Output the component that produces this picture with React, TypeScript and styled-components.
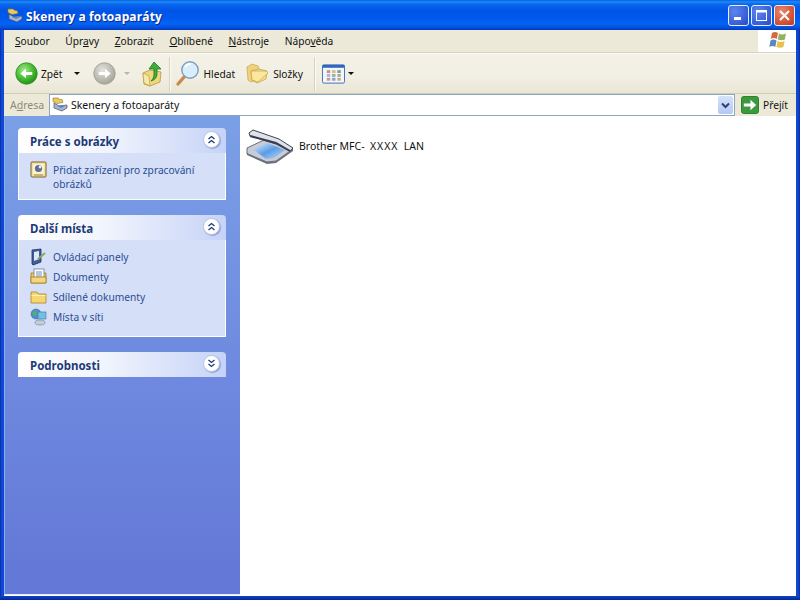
import React from "react";
import styled, { createGlobalStyle } from "styled-components";

const Global = createGlobalStyle`
  html, body { margin: 0; padding: 0; width: 800px; height: 600px; overflow: hidden; background: #0831d9; }
  * { box-sizing: border-box; }
`;
const uiFont = `"Noto Sans", "Open Sans", "Liberation Sans", sans-serif`;

const Win = styled.div`
  width: 800px; height: 600px; display: flex; flex-direction: column;
  font-family: ${uiFont}; font-size: 11px; color: #000;
  background: linear-gradient(90deg, #0a2aa0 0, #0f48d4 1.5px, #0f48d4 798px, #0a2aa0 800px);
  padding-bottom: 4px; position: relative;
`;
const BottomEdge = styled.div`
  position: absolute; left: 0; right: 0; bottom: 0; height: 4px;
  background: linear-gradient(180deg, #0b45c8, #08259a);
`;
const TitleBar = styled.div`
  height: 30px; flex: none; display: flex; align-items: center; padding: 1px 5px 0 7px;
  background: linear-gradient(180deg, #0a5ae0 0%, #1a8cf8 6%, #0a68ee 14%, #0054e6 35%, #0058ee 60%, #0464f2 80%, #0450dc 92%, #0338c0 100%);
`;
const TitleText = styled.div`
  margin: 2px 0 0 3px; color: #fff; font-weight: 700; font-size: 12px; letter-spacing: 0.12px;
  font-family: "Open Sans", ${uiFont}; text-shadow: 1px 1px 0 #0a2a90; flex: 1; white-space: nowrap;
`;
const WinBtn = styled.div<{ $close?: boolean }>`
  width: 21px; height: 21px; margin-left: 2px; border: 1px solid #e8eefc; border-radius: 3px;
  display: flex; align-items: center; justify-content: center;
  background: ${p => p.$close
    ? "radial-gradient(circle at 35% 30%, #e88b70 0%, #d6583a 55%, #b93a1c 100%)"
    : "radial-gradient(circle at 30% 30%, #5c86ea 0%, #3c63dc 60%, #2a48c0 100%)"};
`;
const Inner = styled.div`
  flex: 1; min-height: 0; display: flex; flex-direction: column;
  margin: 0 4px 0 4px; background: #ece9d8; position: relative; z-index: 1;
`;
const MenuBar = styled.div`
  height: 23px; flex: none; display: flex; align-items: center; padding-left: 11px;
  background: #ece9d8; border-bottom: 1px solid #d8d2bd; position: relative;
  box-shadow: 0 1px 0 #fbfaf5;
`;
const MenuItem = styled.span`
  margin-right: 15.6px; font-size: 10.2px; color: #111; white-space: nowrap;
  u { text-decoration: underline; }
`;
const Brand = styled.div`
  margin-left: auto; width: 38px; height: 22px; background: #fff; padding-left: 2px;
  display: flex; align-items: center; justify-content: center;
`;
const ToolBar = styled.div`
  height: 41px; flex: none; display: flex; align-items: center; padding: 1px 0 0 11px;
  background: linear-gradient(180deg, #f4f2e8 0%, #f1efe3 60%, #e9e6d5 100%);
  border-bottom: 1px solid #d0ccb8;
`;
const ToolGroup = styled.div<{ $ml?: number }>`
  display: flex; align-items: center; margin-left: ${p => p.$ml ?? 0}px;
`;
const ToolLabel = styled.span<{ $ml?: number }>`
  margin-left: ${p => p.$ml ?? 3}px; font-size: 10.2px; color: #111; white-space: nowrap;
`;
const Caret = styled.span<{ $muted?: boolean; $ml: number }>`
  width: 0; height: 0; margin-left: ${p => p.$ml}px; flex: none;
  border-left: 3px solid transparent; border-right: 3px solid transparent;
  border-top: 3px solid ${p => (p.$muted ? "#b9b6a8" : "#111")};
`;
const Sep = styled.div<{ $ml: number }>`
  width: 2px; height: 34px; margin-left: ${p => p.$ml}px;
  background: linear-gradient(90deg, #d6d2c0 50%, #fbfaf4 50%);
`;
const AddressBar = styled.div`
  height: 22px; flex: none; display: flex; align-items: center; background: #ece9d8; padding-left: 6px;
`;
const AddressLabel = styled.span`
  color: #8b8a80; font-size: 10.5px; width: 39px; white-space: nowrap;
`;
const Field = styled.div`
  flex: 1; height: 22px; border: 1px solid #8ca5bd; background: #fff; display: flex; align-items: center; padding-left: 2px;
`;
const FieldText = styled.span`
  margin-left: 3px; font-size: 10.5px; color: #111; white-space: nowrap; flex: 1;
`;
const Drop = styled.div`
  width: 15px; height: 18px; margin-right: 1px; border-radius: 2px; display: flex; align-items: center; justify-content: center;
  background: linear-gradient(180deg, #d6e2fb, #b4c8f2);
`;
const Go = styled.div`
  width: 61px; flex: none; display: flex; align-items: center; padding-left: 6px;
`;
const Body = styled.div`
  flex: 1; min-height: 0; display: flex; background: #fff;
`;
const Side = styled.div`
  width: 236px; flex: none; padding: 12px 14px 0 14px;
  display: flex; flex-direction: column; gap: 15px;
  background: linear-gradient(180deg, #7ba0e6 0%, #6f8be0 50%, #6377d6 100%);
  border-left: 1px solid #8ab0f0; border-bottom: 1px solid #e6ecfb;
  height: 479px;
`;
const Card = styled.div`
  width: 208px; margin-left: -1px;
`;
const CardHead = styled.div`
  height: 25px; display: flex; align-items: center; justify-content: space-between; padding: 0 6px 0 12px;
  border-radius: 4px 4px 0 0;
  background: linear-gradient(90deg, #ffffff 0%, #f2f5fd 40%, #c6d3f7 100%);
  font-size: 11.5px; font-weight: 700; color: #1c3a78;
`;
const CardTitle = styled.span`
  margin-top: 2px;
`;
const Chevron = styled.div`
  width: 17px; height: 17px; border-radius: 50%; background: #fff; border: 1px solid #b7c4ea; margin-bottom: 2px;
  box-shadow: 1px 1px 1px #8fa2d8; display: flex; align-items: center; justify-content: center;
`;
const CardBody = styled.div<{ $h: number }>`
  height: ${p => p.$h}px; padding: 8px 8px 0 11px; background: #d5dff7;
  border: 1px solid #fff; border-top: none; display: flex; flex-direction: column;
`;
const Task = styled.div`
  display: flex; align-items: flex-start; color: #2a4d94; font-size: 10.2px; line-height: 14px; min-height: 20px;
  svg { flex: none; margin-right: 6px; }
  span { display: block; margin-top: 2px; }
`;
const Content = styled.div`
  flex: 1; padding: 12px 0 0 5px; background: #fff;
`;
const Item = styled.div`
  display: flex; align-items: center; font-size: 10.5px; color: #111; white-space: pre;
`;
const ItemLabel = styled.span`
  margin-left: 5px;
`;
const Model = styled.span`
  letter-spacing: 0.9px;
`;

const Back = ({ grey }: { grey?: boolean }) => {
  const id = grey ? "gf" : "gb";
  return (
    <svg width="23" height="23" viewBox="0 0 24 24">
      <defs>
        <radialGradient id={id} cx="40%" cy="35%" r="70%">
          {grey ? <><stop offset="0" stopColor="#e4e3dd" /><stop offset="1" stopColor="#a3a298" /></> : <><stop offset="0" stopColor="#a6ea8c" /><stop offset="0.6" stopColor="#44b82e" /><stop offset="1" stopColor="#1b8a18" /></>}
        </radialGradient>
      </defs>
      <circle cx="12" cy="12" r="11.2" fill={`url(#${id})`} stroke={grey ? "#9b9a90" : "#2b8e22"} strokeWidth="0.8" />
      {grey
        ? <path d="M6 10.5h6.5V7l6 5-6 5v-3.5H6z" fill="#fff" />
        : <path d="M18 10.5h-6.5V7l-6 5 6 5v-3.5H18z" fill="#fff" />}
    </svg>
  );
};
const FolderUp = () => (
  <svg width="22" height="26" viewBox="0 0 22 26">
    <path d="M2 12l7-3 11 2-1 10-10 4-6-2z" fill="#f0d67c" stroke="#b6953c" strokeWidth="0.8" />
    <path d="M2 12l6 3 1 10-6-3z" fill="#f8e8a8" stroke="#b6953c" strokeWidth="0.6" />
    <path d="M13 1l7 7h-4v5c0 3-2 6-6 7 2-2 3-4 3-7V8H8z" fill="#3cae3a" stroke="#1f7a1e" strokeWidth="0.8" />
  </svg>
);
const Search = () => (
  <svg width="25" height="27" viewBox="0 0 25 27">
    <path d="M3 24l7-8" stroke="#c98a4a" strokeWidth="3.4" strokeLinecap="round" />
    <circle cx="15" cy="10" r="8.2" fill="#d8eefc" stroke="#7f9cc0" strokeWidth="1.4" />
    <path d="M10 7a6 6 0 0 1 6-3" stroke="#fff" strokeWidth="1.6" fill="none" />
  </svg>
);
const Folders = () => (
  <svg width="23" height="21" viewBox="0 0 23 21">
    <path d="M1 4l5-3 6 2 1 3-2 11-6 2-3-2z" fill="#f0d27a" stroke="#c4a44e" strokeWidth="0.7" />
    <path d="M5 8l8-2 8 2-1 8-9 4-5-3z" fill="#f8e08c" stroke="#c4a44e" strokeWidth="0.8" />
    <path d="M5 8l15 0 2 2-10 9-6-2z" fill="#fbe89e" stroke="#c4a44e" strokeWidth="0.7" />
  </svg>
);
const Views = () => (
  <svg width="23" height="20" viewBox="0 0 24 20">
    <rect x="0.5" y="0.5" width="23" height="19" rx="1.5" fill="#f4f6fa" stroke="#3b6fb8" />
    <rect x="0.5" y="0.5" width="23" height="3" fill="#2f66c0" />
    {[5, 10.5, 16].map((x, i) => [6, 10, 14].map((y, j) => (
      <rect key={`${i}${j}`} x={x} y={y} width="3.6" height="3"
        fill={[["#c89090", "#a8b8d8", "#c89a9a"], ["#d0bc80", "#98b498", "#8ca4cc"], ["#7aa488", "#a8a8b4", "#c4b078"]][i][j]} />
    )))}
  </svg>
);
const Scanner = () => (
  <svg width="16" height="16" viewBox="0 0 16 16">
    <path d="M1 1h5l2 1.5h2l1 3-6 1-4-2z" fill="#ecc95e" stroke="#8a7430" strokeWidth="0.6" />
    <path d="M2 6l5 3 8-1v3l-5 3-8-3z" fill="#aab4c8" stroke="#44506c" strokeWidth="0.7" />
    <path d="M5 9l4 2 4-2-2-1z" fill="#4f86d0" />
  </svg>
);
const BigScanner = () => (
  <svg width="49" height="36" viewBox="0 0 49 36">
    <defs>
      <linearGradient id="gl" x1="0" y1="0" x2="1" y2="1"><stop offset="0" stopColor="#e8f2fc" /><stop offset="0.5" stopColor="#5a9be6" /><stop offset="1" stopColor="#c8ddf5" /></linearGradient>
    </defs>
    <path d="M2 20L21 11l27 10-17 12-9 1L2 26z" fill="#c8ccd4" stroke="#4a4f60" strokeWidth="0.8" />
    <path d="M2 25l20 9 9-1 17-12v2L31 35l-9 1L2 27z" fill="#6b7080" />
    <path d="M8 21l14-6 18 7-11 8-8 1z" fill="url(#gl)" />
    <path d="M4 5l4-3 26 9 14 9-3 3-14-7L5 8z" fill="#dfe2e8" stroke="#3f4454" strokeWidth="1" />
    <path d="M5 8l26 7 14 8" stroke="#3a3f52" strokeWidth="2" fill="none" />
  </svg>
);
const Flag = () => (
  <svg width="20" height="20" viewBox="0 0 20 20">
    <path d="M4 2q3-2 6 0l-1.2 6q-3-2-6 0z" fill="#d8683f" />
    <path d="M11 2.5q3 2 7 0l-1.2 6q-3 1.5-7 0z" fill="#8fb45a" />
    <path d="M2.5 9.5q3-2 6 0L7.3 16q-3-2-6 0z" fill="#5b86c4" />
    <path d="M9.6 10q3 2 7 0l-1.2 6q-3 1.5-7 0z" fill="#e8c050" />
  </svg>
);
const GoIcon = () => (
  <svg width="18" height="18" viewBox="0 0 19 19">
    <rect x="0.5" y="0.5" width="18" height="18" rx="2.5" fill="#3a9a3c" stroke="#2a7a2c" />
    <path d="M3 8h7V4l6 5.5-6 5.5v-4H3z" fill="#fff" />
  </svg>
);
const AddTask = () => (
  <svg width="17" height="17" viewBox="0 0 17 17">
    <rect x="1" y="1" width="15" height="15" rx="1" fill="#f2e0a0" stroke="#7a6228" />
    <rect x="3" y="3" width="11" height="10" fill="#fbf3d0" />
    <circle cx="8.5" cy="7.5" r="3.6" fill="#5f6f90" />
    <circle cx="10" cy="6" r="1.4" fill="#e8eef8" />
    <path d="M4 14h9" stroke="#a08840" />
  </svg>
);
const ControlIcon = () => (
  <svg width="17" height="18" viewBox="0 0 17 18">
    <path d="M2 2l9-1v13l-8 3-1-1z" fill="#3f5f98" stroke="#1f3468" strokeWidth="0.8" />
    <path d="M4 4l5-1v8l-5 2z" fill="#dfe8f6" />
    <path d="M8 11l7-6" stroke="#8aa860" strokeWidth="2" />
  </svg>
);
const DocsIcon = () => (
  <svg width="17" height="17" viewBox="0 0 17 17">
    <path d="M1 5h15v10H1z" fill="#f3c85c" stroke="#a07c28" strokeWidth="0.8" />
    <rect x="4" y="1" width="10" height="10" fill="#fff" stroke="#6f7f9a" strokeWidth="0.8" />
    <path d="M6 4h6M6 6h6M6 8h6" stroke="#6f8ec0" />
    <path d="M1 9h15v6H1z" fill="#f6d678" stroke="#a07c28" strokeWidth="0.8" />
  </svg>
);
const FolderIcon = () => (
  <svg width="17" height="17" viewBox="0 0 17 17">
    <path d="M1 4h6l1.5 2H16v9H1z" fill="#f7d66e" stroke="#a8842c" strokeWidth="0.8" />
    <path d="M1.5 7.5h14" stroke="#fdf0b8" />
  </svg>
);
const NetIcon = () => (
  <svg width="17" height="18" viewBox="0 0 17 18">
    <circle cx="6" cy="6" r="5" fill="#4a90d8" stroke="#2a5a9a" strokeWidth="0.5" />
    <path d="M3 3l4 1-1 4-3-1z" fill="#60b050" />
    <rect x="8" y="4" width="8" height="7" fill="#6fc0e8" stroke="#50708f" strokeWidth="0.6" />
    <ellipse cx="10" cy="14.5" rx="5" ry="2.5" fill="#c4cad6" stroke="#707a90" strokeWidth="0.6" />
  </svg>
);
const Chev = ({ down }: { down?: boolean }) => (
  <svg width="9" height="9" viewBox="0 0 9 9" fill="none" stroke="#1c3a78" strokeWidth="1.3">
    {down ? <path d="M1.5 1l3 2.5L7.5 1M1.5 5l3 2.5L7.5 5" /> : <path d="M1.5 4l3-2.5L7.5 4M1.5 8l3-2.5L7.5 8" />}
  </svg>
);

const menus: [string, string, string][] = [
  ["", "S", "oubor"], ["Úpr", "a", "vy"], ["", "Z", "obrazit"], ["", "O", "blíbené"], ["", "N", "ástroje"], ["Nápo", "v", "ěda"],
];

export default function App() {
  return (
    <Win>
      <Global />
      <TitleBar>
        <Scanner />
        <TitleText>Skenery a fotoaparáty</TitleText>
        <WinBtn>
          <svg width="11" height="11" viewBox="0 0 11 11"><rect x="1" y="7" width="7" height="3" fill="#fff" /></svg>
        </WinBtn>
        <WinBtn>
          <svg width="13" height="13" viewBox="0 0 13 13" fill="none" stroke="#fff"><rect x="1.5" y="1.5" width="10" height="10" /><path d="M1 2.5h11" strokeWidth="2" /></svg>
        </WinBtn>
        <WinBtn $close>
          <svg width="13" height="13" viewBox="0 0 13 13" stroke="#fff" strokeWidth="2"><path d="M2 2l9 9M11 2l-9 9" /></svg>
        </WinBtn>
      </TitleBar>
      <Inner>
        <MenuBar>
          {menus.map(([a, u, b]) => <MenuItem key={u + b}>{a}<u>{u}</u>{b}</MenuItem>)}
          <Brand><Flag /></Brand>
        </MenuBar>
        <ToolBar>
          <ToolGroup><Back /><ToolLabel>Zpět</ToolLabel><Caret $ml={11} /></ToolGroup>
          <ToolGroup $ml={13}><Back grey /><Caret $muted $ml={8} /></ToolGroup>
          <ToolGroup $ml={11}><FolderUp /></ToolGroup>
          <Sep $ml={6} />
          <ToolGroup $ml={4}><Search /><ToolLabel $ml={4}>Hledat</ToolLabel></ToolGroup>
          <ToolGroup $ml={11}><Folders /><ToolLabel $ml={4}>Složky</ToolLabel></ToolGroup>
          <Sep $ml={11} />
          <ToolGroup $ml={6}><Views /><Caret $ml={3} /></ToolGroup>
        </ToolBar>
        <AddressBar>
          <AddressLabel>A<u>d</u>resa</AddressLabel>
          <Field>
            <Scanner />
            <FieldText>Skenery a fotoaparáty</FieldText>
            <Drop>
              <svg width="9" height="7" viewBox="0 0 9 7" fill="none" stroke="#2a3f78" strokeWidth="2"><path d="M1 1.5l3.5 3.5L8 1.5" /></svg>
            </Drop>
          </Field>
          <Go><GoIcon /><ToolLabel $ml={4}>Přejít</ToolLabel></Go>
        </AddressBar>
        <Body>
          <Side>
            <Card>
              <CardHead><CardTitle>Práce s obrázky</CardTitle><Chevron><Chev /></Chevron></CardHead>
              <CardBody $h={47}>
                <Task><AddTask /><span>Přidat zařízení pro zpracování obrázků</span></Task>
              </CardBody>
            </Card>
            <Card>
              <CardHead><CardTitle>Další místa</CardTitle><Chevron><Chev /></Chevron></CardHead>
              <CardBody $h={97}>
                <Task><ControlIcon /><span>Ovládací panely</span></Task>
                <Task><DocsIcon /><span>Dokumenty</span></Task>
                <Task><FolderIcon /><span>Sdílené dokumenty</span></Task>
                <Task><NetIcon /><span>Místa v síti</span></Task>
              </CardBody>
            </Card>
            <Card>
              <CardHead><CardTitle>Podrobnosti</CardTitle><Chevron><Chev down /></Chevron></CardHead>
            </Card>
          </Side>
          <Content>
            <Item><BigScanner /><ItemLabel>Brother MFC-  <Model>XXXX</Model>  LAN</ItemLabel></Item>
          </Content>
        </Body>
      </Inner>
      <BottomEdge />
    </Win>
  );
}
